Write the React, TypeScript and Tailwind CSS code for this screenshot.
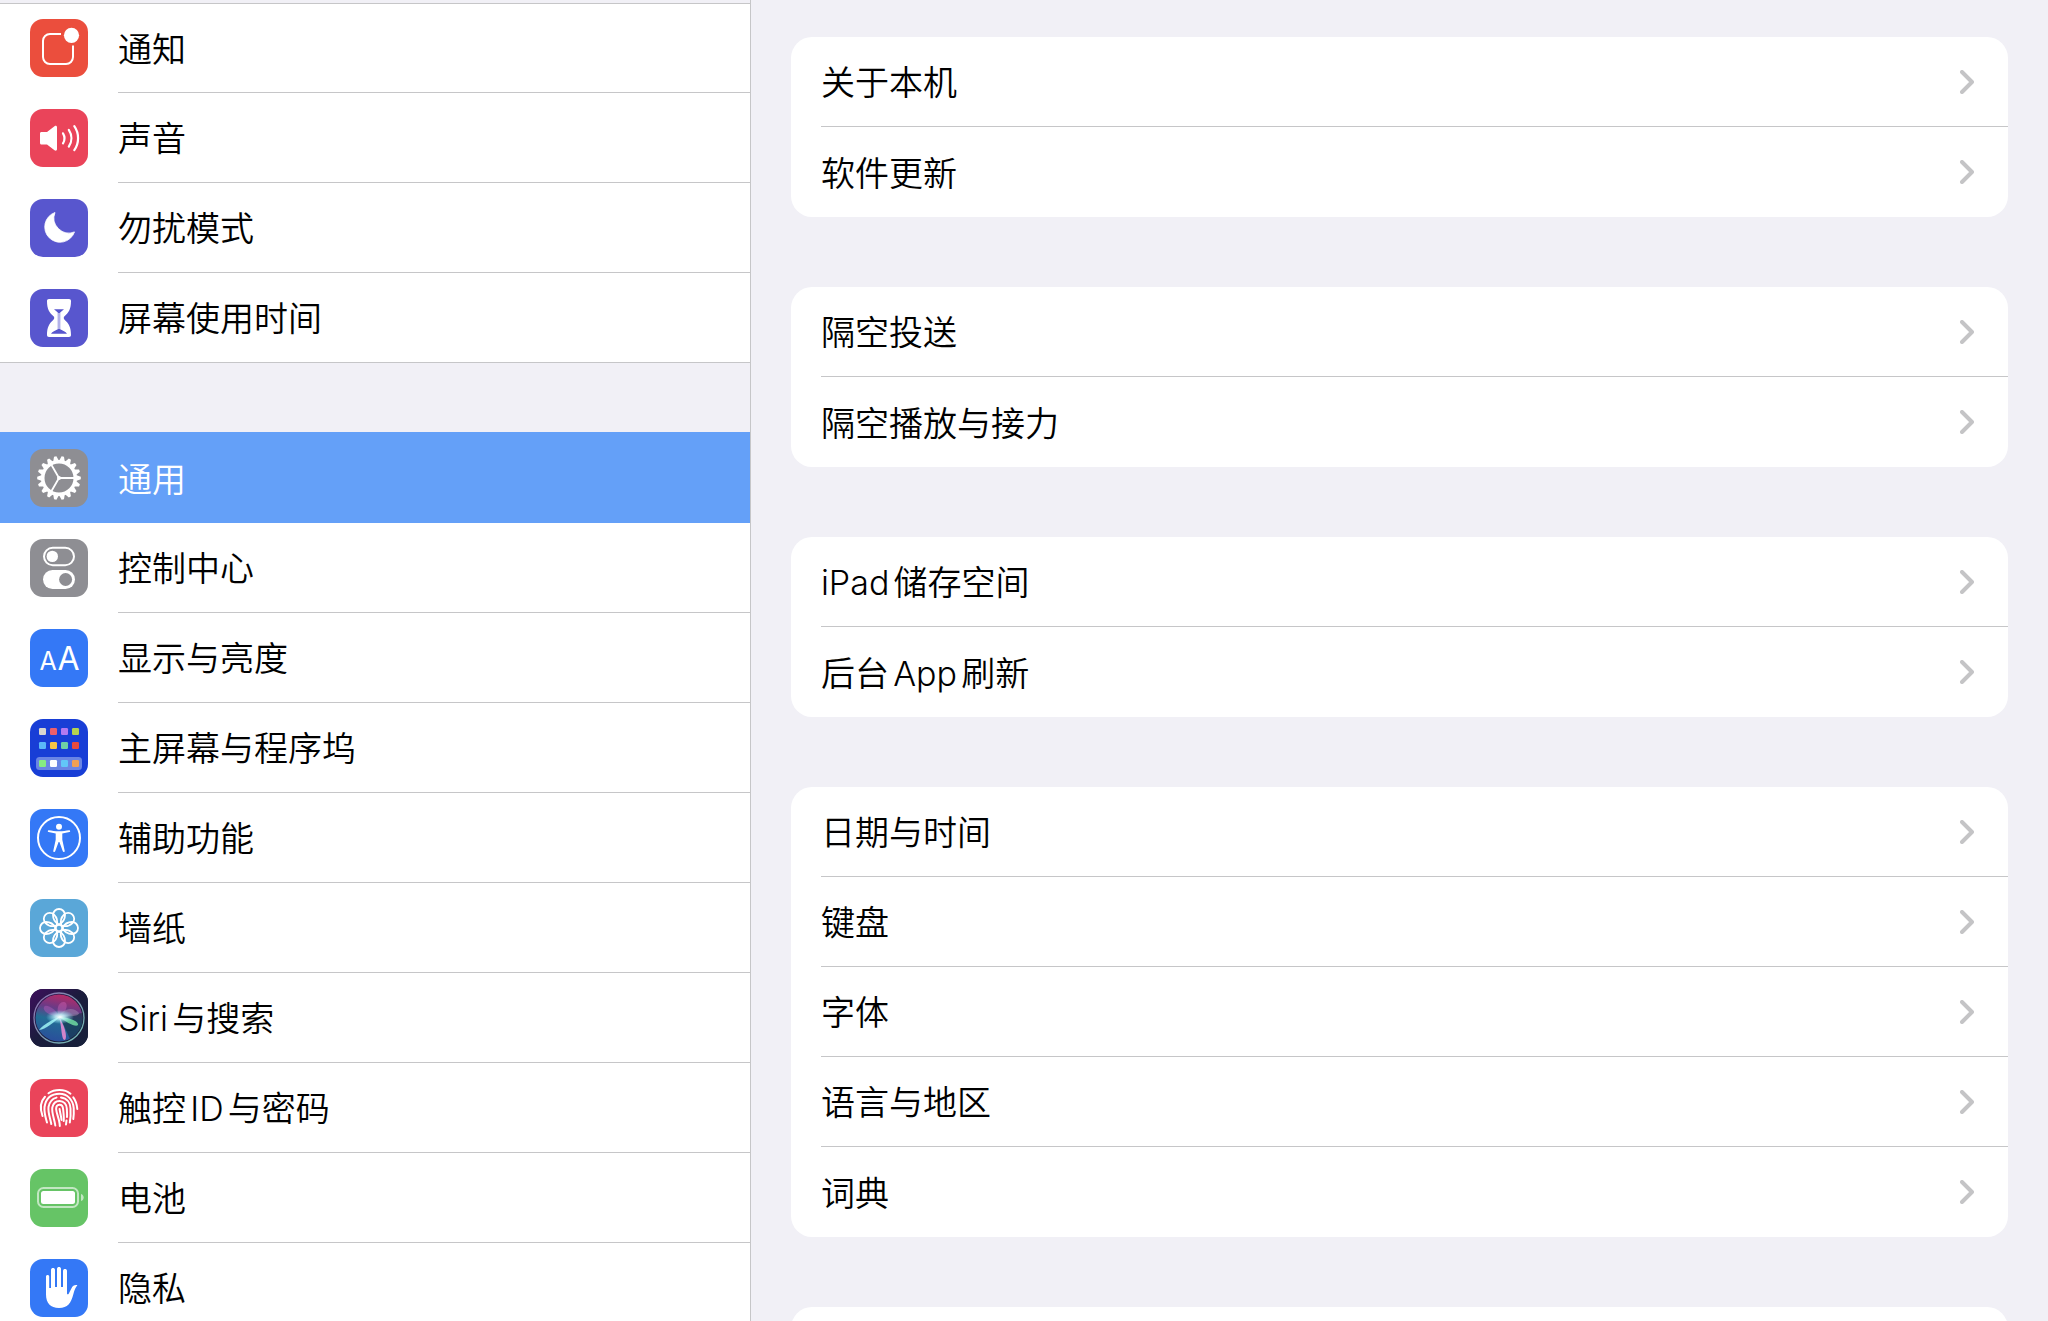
import type { ReactNode } from 'react';
import clsx from 'clsx';

type SidebarItem = {
  label: string;
  tile: string;
  icon: ReactNode;
};

const gearTeeth = Array.from({ length: 18 }, (_, i) => i * 20);
const petals = Array.from({ length: 8 }, (_, i) => i * 45);

const homeApps = [
  { y: 9, colors: ['#d7d6cf', '#ed5f6b', '#b379f0', '#b5d34f'] },
  { y: 23, colors: ['#5bb9f8', '#f7c545', '#6fd0a5', '#e94b3c'] },
  { y: 41, colors: ['#86ec82', '#ffffff', '#62c6f8', '#f0a052'] },
];

const NotificationIcon = () => (
  <>
    <path d="M31 15H20a7 7 0 0 0-7 7v16a7 7 0 0 0 7 7h16a7 7 0 0 0 7-7V26.5" fill="none" stroke="#fff" strokeWidth="2" />
    <circle cx="41.5" cy="16.3" r="7.6" fill="#fff" />
  </>
);

const SoundIcon = () => (
  <>
    <path d="M11.5 23H17l7.500-5.800c1.200-.9 2.500-.4 2.500 1v22c0 1.400-1.300 1.900-2.500 1L17 35.400h-5.500c-1 0-1.500-.6-1.500-1.500v-9.400c0-.9.5-1.500 1.500-1.500z" fill="#fff" />
    <g fill="none" stroke="#fff" strokeWidth="2.200" strokeLinecap="round">
      <path d="M33 24.300a9.500 9.500 0 0 1 0 10" />
      <path d="M38.800 20.800a15 15 0 0 1 0 16.800" />
      <path d="M44.300 17.200a21 21 0 0 1 0 24" />
    </g>
  </>
);

const MoonIcon = () => (
  <path
    d="M25 13.500A15.300 15.300 0 1 0 44.500 32.900A15 15 0 0 1 25 13.500z"
    fill="#fff"
    stroke="#fff"
    strokeWidth=".8"
    strokeLinejoin="round"
  />
);

const HourglassIcon = () => (
  <>
    <path
      d="M19 10h20c1.300 0 2 .8 2 2 0 8-2.300 11.500-6 14.800-1.700 1.500-1.700 2.900 0 4.400 3.700 3.300 6 6.800 6 14.800 0 1.200-.7 2-2 2H19c-1.300 0-2-.8-2-2 0-8 2.300-11.500 6-14.800 1.700-1.500 1.700-2.900 0-4.400-3.700-3.300-6-6.800-6-14.800 0-1.200.7-2 2-2z"
      fill="#fff"
    />
    <path d="M24 20.200h10l-3.800 3.300v16.700c2.500 1.400 5.500 2.200 6.800 4.500H21c1.300-2.300 4.300-3.100 6.800-4.500V23.500z" fill="#5856ce" />
    <path d="M29 24v16" stroke="#fff" strokeWidth="1.100" />
  </>
);

const GearIcon = () => (
  <g transform="translate(29 29)">
    {gearTeeth.map((angle) => (
      <path key={angle} d="M17-2.900L21.800-1.200V1.200L17 2.900z" fill="#fff" transform={`rotate(${angle})`} />
    ))}
    <circle r="16.200" fill="none" stroke="#fff" strokeWidth="3.400" />
    <path d="M0 0H15M0 0L-7.500-13M0 0L-7.500 13" stroke="#fff" strokeWidth="1.800" />
    <circle r="2" fill="#fff" />
  </g>
);

const ControlCenterIcon = () => (
  <>
    <rect x="14" y="8.800" width="30" height="17.400" rx="8.700" fill="none" stroke="#fff" strokeWidth="2" />
    <circle cx="22.300" cy="17.400" r="5.700" fill="#fff" />
    <rect x="13" y="31" width="32" height="19" rx="9.500" fill="#fff" />
    <circle cx="35.600" cy="40.500" r="6.500" fill="#8e8e93" />
  </>
);

const TextSizeIcon = () => (
  <g fill="#fff" fontFamily="Inter, sans-serif" fontWeight="400">
    <text x="9.500" y="41" fontSize="25">A</text>
    <text x="27.500" y="41" fontSize="32">A</text>
  </g>
);

const HomeScreenIcon = () => (
  <>
    <rect x="6" y="38" width="46" height="13" rx="3.500" fill="#6a85e4" />
    {homeApps.map((row) =>
      row.colors.map((color, i) => (
        <rect key={color} x={9 + i * 11} y={row.y} width="7" height="7" rx="1.300" fill={color} />
      ))
    )}
  </>
);

const AccessibilityIcon = () => (
  <>
    <circle cx="29" cy="29" r="21" fill="none" stroke="#fff" strokeWidth="2" />
    <circle cx="29" cy="17.800" r="3" fill="#fff" />
    <path
      d="M18.800 21.300c3 .5 6.500 1 10.200 1s7.200-.5 10.200-1c1.100-.2 1.400 1.500.3 1.800l-7.200 1.500v6.200l2.400 11c.3 1.400-1.500 1.800-1.900.5L29.400 33h-.8l-3.400 9.300c-.4 1.300-2.200.9-1.900-.5l2.400-11v-6.200l-7.200-1.500c-1.100-.3-.8-2 .3-1.800z"
      fill="#fff"
    />
  </>
);

const WallpaperIcon = () => (
  <g transform="translate(29 29)" fill="none" stroke="#fff" strokeWidth="1.800">
    {petals.map((angle) => (
      <path
        key={angle}
        d="M0-3.500C-3-5-6-8.500-6-13A6 6 0 0 1 6-13C6-8.500 3-5 0-3.500z"
        transform={`rotate(${angle})`}
      />
    ))}
    <circle r="3.200" />
  </g>
);

const SiriIcon = () => (
  <>
    <defs>
      <linearGradient id="siri-bg" x1="0" y1="0" x2="1" y2="1">
        <stop offset="0" stopColor="#3d0f5c" />
        <stop offset=".5" stopColor="#1a1c3c" />
        <stop offset="1" stopColor="#17213a" />
      </linearGradient>
      <linearGradient id="siri-orb" x1=".6" y1="0" x2=".4" y2="1">
        <stop offset="0" stopColor="#b82a66" />
        <stop offset=".3" stopColor="#6b3a86" />
        <stop offset=".55" stopColor="#226d94" />
        <stop offset="1" stopColor="#2a4e9c" />
      </linearGradient>
      <linearGradient id="siri-ring" x1="0" y1="0" x2="1" y2="1">
        <stop offset="0" stopColor="#8d6bae" />
        <stop offset="1" stopColor="#6fc0b4" />
      </linearGradient>
      <radialGradient id="siri-glow">
        <stop offset="0" stopColor="#fff" />
        <stop offset=".35" stopColor="#c8fbff" stopOpacity=".8" />
        <stop offset="1" stopColor="#8ce8ff" stopOpacity="0" />
      </radialGradient>
    </defs>
    <rect width="58" height="58" fill="url(#siri-bg)" />
    <circle cx="29" cy="29" r="23.500" fill="url(#siri-orb)" />
    <path d="M30 28L52 24A23.500 23.500 0 0 1 40 50z" fill="#142c40" opacity=".6" />
    <path d="M30 28C20 27 12 22 14 18s12 2 16 10z" fill="#b95bbd" opacity=".45" />
    <path d="M29 28C26 20 28 14 33 13s6 8-4 15z" fill="#d866b8" opacity=".4" />
    <path d="M29 28c1-7 14-12 20-4 0 4-12 3-20 4z" fill="#9c7fa8" opacity=".6" />
    <path d="M29 28c8 0 20 4 19 8-2 3-12-3-19-8z" fill="#74e4a6" opacity=".8" />
    <path d="M29 28c5 7 9 20 6 23-4 0-3-14-6-23z" fill="#f08cd2" opacity=".85" />
    <path d="M31 27C22 31 14 35 9 41c7-1 14-7 22-14z" fill="#9df3f5" opacity=".85" />
    <ellipse cx="30" cy="28" rx="14" ry="7" fill="url(#siri-glow)" />
    <circle cx="29" cy="29" r="25" fill="none" stroke="url(#siri-ring)" strokeWidth="1.300" />
  </>
);

const FingerprintIcon = () => (
  <g fill="none" stroke="#fff" strokeWidth="2" strokeLinecap="round">
    <path d="M18.500 14.300Q23 11 29.500 11T40.500 14.700" />
    <path d="M15 17.800C11 22 9.500 29 12.500 37" />
    <path d="M43.300 18.300Q46.800 23 47.300 30" />
    <path d="M17 43.500C15.500 38 14 34 14.500 28 16 19 22 14.800 29.500 14.800c8 0 13.500 6 14.200 14.200.2 4 .3 7-.4 11" />
    <path d="M21.300 45c-1-6-3.500-11-2.800-17C19.500 22.500 23 19.500 26.500 18.600" />
    <path d="M31 18.500c6 .8 9.300 5.500 9.500 11 .3 5 .2 9.500-.7 14" />
    <path d="M25.300 46.500C24.500 40 21.500 34 22.300 28.500c1-4.500 4-6.500 7.200-6.500 4.500 0 7 3.500 7.300 7.500.2 3 .4 6 .2 8.500" />
    <path d="M36.500 41.500L36 45.500" />
    <path d="M29.800 47c0-6-3.300-12-3.700-17 0-5.500 6.500-6 7 0 .4 4 1 8 .6 12" />
    <path d="M29.600 30c.4 4 1.600 7 1.900 11" />
  </g>
);

const BatteryIcon = () => (
  <>
    <rect x="8" y="19" width="40" height="19" rx="5.500" fill="none" stroke="#fff" strokeOpacity=".6" strokeWidth="2" />
    <rect x="11" y="22" width="34" height="13" rx="2.500" fill="#fff" />
    <path d="M51 25c3.600 1 3.600 6 0 7z" fill="#fff" fillOpacity=".6" />
  </>
);

const HandIcon = () => (
  <path
    d="M16 17.500c0-2 3.200-2 3.200 0V29H21V11c0-2.600 4-2.600 4 0v17h2V10c0-2.600 4-2.600 4 0v18h2V12c0-2.600 4-2.600 4 0v22.500c0 1 1.200 1.200 1.700.2l2.800-5.500c1.300-2.600 3.500-3.600 5.900-2.900-2 2.200-3 5-4 8.700-2.400 9-5.600 14-14.400 14-8.500 0-13-5-13-13.500z"
    fill="#fff"
  />
);

const sidebarGroups: SidebarItem[][] = [
  [
    { label: '通知', tile: 'bg-[#eb4e3d]', icon: <NotificationIcon /> },
    { label: '声音', tile: 'bg-[#ea445a]', icon: <SoundIcon /> },
    { label: '勿扰模式', tile: 'bg-[#5856ce]', icon: <MoonIcon /> },
    { label: '屏幕使用时间', tile: 'bg-[#5856ce]', icon: <HourglassIcon /> },
  ],
  [
    { label: '通用', tile: 'bg-[#8e8e93]', icon: <GearIcon /> },
    { label: '控制中心', tile: 'bg-[#8e8e93]', icon: <ControlCenterIcon /> },
    { label: '显示与亮度', tile: 'bg-[#3478f6]', icon: <TextSizeIcon /> },
    { label: '主屏幕与程序坞', tile: 'bg-[#183ed6]', icon: <HomeScreenIcon /> },
    { label: '辅助功能', tile: 'bg-[#3478f6]', icon: <AccessibilityIcon /> },
    { label: '墙纸', tile: 'bg-[#5aa7d8]', icon: <WallpaperIcon /> },
    { label: 'Siri与搜索', tile: 'bg-[#1a1c3c]', icon: <SiriIcon /> },
    { label: '触控ID与密码', tile: 'bg-[#ea445a]', icon: <FingerprintIcon /> },
    { label: '电池', tile: 'bg-[#66c466]', icon: <BatteryIcon /> },
    { label: '隐私', tile: 'bg-[#3478f6]', icon: <HandIcon /> },
  ],
];

const detailGroups = [
  ['关于本机', '软件更新'],
  ['隔空投送', '隔空播放与接力'],
  ['iPad储存空间', '后台App刷新'],
  ['日期与时间', '键盘', '字体', '语言与地区', '词典'],
];

type SidebarRowProps = {
  item: SidebarItem;
  selected: boolean;
  first: boolean;
  last: boolean;
};

const SidebarRow = ({ item, selected, first, last }: SidebarRowProps) => (
  <li>
    <a
      href="#"
      aria-current={selected ? 'page' : undefined}
      className={clsx(
        'flex gap-[30px] pl-[30px]',
        selected ? 'border-t border-[#64a0f8] bg-[#64a0f8] text-white' : 'border-[#c6c6c8] bg-white text-black',
        !selected && first && 'border-t',
        !selected && last && 'border-b'
      )}
    >
      <span
        className={clsx(
          'size-[58px] shrink-0 overflow-hidden rounded-[13px]',
          first && !selected ? 'mt-[15px]' : 'mt-4',
          last ? 'mb-[15px]' : 'mb-4',
          item.tile
        )}
      >
        <svg viewBox="0 0 58 58" className="size-full" aria-hidden="true">
          {item.icon}
        </svg>
      </span>
      <span
        className={clsx(
          'flex flex-1 items-center pt-[3px]',
          !selected && !last && 'border-b border-[#c6c6c8]'
        )}
      >
        {item.label}
      </span>
    </a>
  </li>
);

const Sidebar = () => (
  <nav className="flex flex-col gap-[69px] overflow-y-auto border-r border-[#c6c6c8] pt-[3px] [scrollbar-width:none]">
    {sidebarGroups.map((group) => (
      <ul key={group[0].label} className="shrink-0">
        {group.map((item, i) => (
          <SidebarRow
            key={item.label}
            item={item}
            selected={item.label === '通用'}
            first={i === 0}
            last={i === group.length - 1}
          />
        ))}
      </ul>
    ))}
  </nav>
);

const Chevron = () => (
  <svg viewBox="0 0 14 24" className="h-6 w-[14px]" fill="none" aria-hidden="true">
    <path d="M2 2l10 10L2 22" stroke="#c4c4c6" strokeWidth="4" strokeLinecap="round" strokeLinejoin="round" />
  </svg>
);

const DetailCard = ({ rows }: { rows: string[] }) => (
  <ul className="shrink-0 rounded-[21px] bg-white pl-[30px]">
    {rows.map((label, i) => (
      <li key={label} className={clsx(i < rows.length - 1 && 'border-b border-[#c6c6c8]')}>
        <a href="#" className={clsx('flex items-center justify-between pr-[34px]', i < rows.length - 1 ? 'h-[89px]' : 'h-[90px]')}>
          <span className="pt-[3px]">{label}</span>
          <Chevron />
        </a>
      </li>
    ))}
  </ul>
);

const App = () => {
  return (
    <div
      lang="zh-CN"
      className="grid h-screen grid-cols-[11fr_19fr] grid-rows-1 overflow-hidden bg-[#f1f0f6] font-[Inter,'Noto_Sans_CJK_SC',sans-serif] text-[34px] leading-10 font-[350] text-black [text-autospace:normal]"
    >
      <Sidebar />
      <main className="flex flex-col gap-[70px] overflow-y-auto px-10 pt-[37px] [scrollbar-width:none]">
        {detailGroups.map((rows) => (
          <DetailCard key={rows[0]} rows={rows} />
        ))}
        {/* next card, only its top edge shows until scrolled */}
        <div className="h-[90px] shrink-0 rounded-[21px] bg-white" />
      </main>
    </div>
  );
};

export default App;
